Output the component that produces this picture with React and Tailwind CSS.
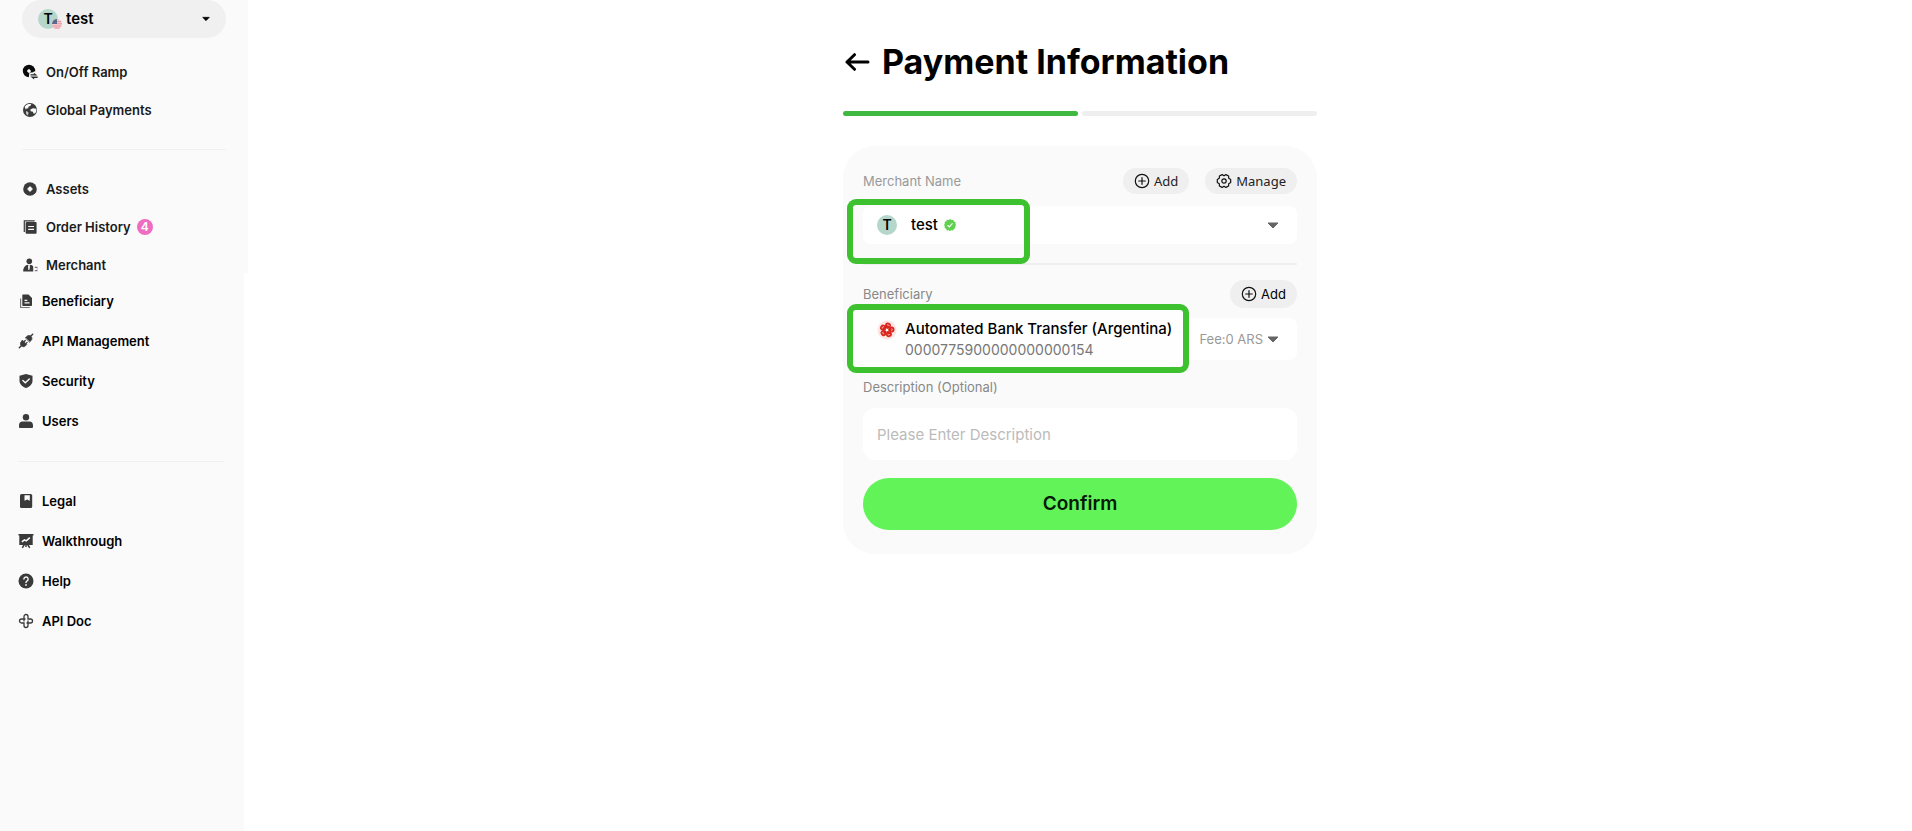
import React, { useState } from 'react';

/* ---------- icons ---------- */
const RampIcon = () => (
  <svg viewBox="0 0 16 16" className="w-4 h-4 shrink-0" aria-hidden="true">
    <circle cx="7" cy="7" r="6.200" fill="#0a0a0a" />
    <path fill="#fafafa" d="m7 4.800 2.200 2.200L7 9.200 4.800 7Z" />
    <path fill="#fafafa" d="M7.400 8.600h3l2-1.400 3.600 3.200V16H8.600l-1.800-2.800Z" />
    <path fill="#2b2b2b" d="M8.500 10.200h3.300V8.700l3.700 2.900h-7Zm7.100 2.400v1.300h-3.400v1.500l-3.900-2.800Z" />
  </svg>
);

const GlobeIcon = () => (
  <svg viewBox="0 0 16 16" className="w-4 h-4 shrink-0" aria-hidden="true">
    <circle cx="8" cy="8" r="7" fill="#3a3a3a" />
    <path fill="#fafafa" d="M2.600 4.800c1-1.500 2.200-2.400 3.900-2.900l2.700.1-.8 1.900-1.800.6-.4 1.700-1.700.3-.5 1.200Z" />
    <path fill="#fafafa" d="M8.300 7.400 11 6.200l3.300.6c.2 1.700-.1 3.200-1 4.500l-1.600.4-.8-1.900-2.200-.6Z" />
    <path fill="#fafafa" d="M4 9l2.200 1.100.3 1.500-.8 1.800C4.400 12.600 3.700 11 4 9Z" opacity=".75" />
  </svg>
);

const AssetsIcon = () => (
  <svg viewBox="0 0 16 16" className="w-4 h-4 shrink-0" aria-hidden="true">
    <circle cx="8" cy="8" r="6.800" fill="#3a3a3a" />
    <path fill="#fafafa" d="M8 6 10 8 8 10 6 8Z" stroke="#fafafa" strokeWidth="1.400" strokeLinejoin="round" />
  </svg>
);

const OrderIcon = () => (
  <svg viewBox="0 0 16 16" className="w-4 h-4 shrink-0" aria-hidden="true">
    <path fill="none" stroke="#3a3a3a" strokeWidth="1.200" d="M2.300 13V1.800h10.400" />
    <rect x="3.600" y="3" width="11" height="11.800" rx="1" fill="#3a3a3a" />
    <path stroke="#fafafa" strokeWidth="1.200" d="M6.200 7.500h5.800M6.200 10.300h5.800" />
  </svg>
);

const MerchantIcon = () => (
  <svg viewBox="0 0 16 16" className="w-4 h-4 shrink-0" aria-hidden="true">
    <circle cx="7.300" cy="4.200" r="2.800" fill="#3a3a3a" />
    <path fill="#3a3a3a" d="M1.200 14.500c0-4 2-6.400 5-6.700l.8 3 1-3c1.500.1 2.600.8 3.200 1.700v5Z" />
    <path fill="#fafafa" d="m7 8.600.9 1-.5 3.300h-1l-.4-3.300Z" />
    <path stroke="#777" strokeWidth="1.200" d="M12.800 10.400h2.700M12.800 13.600h2.700M14.800 12h.8" />
  </svg>
);

const BeneficiaryIcon = () => (
  <svg viewBox="0 0 16 16" className="w-4 h-4 shrink-0" aria-hidden="true">
    <path fill="none" stroke="#777" strokeWidth="1.200" d="M2.600 5.500v9h9.200" />
    <path fill="#3a3a3a" d="M4.300 2.500c0-.6.4-1 1-1h5.200L14 5v7c0 .6-.4 1-1 1H5.300c-.6 0-1-.4-1-1Z" />
    <path stroke="#fafafa" strokeWidth="1.200" d="M6.500 7.300h2.800M6.500 9.900h5" />
  </svg>
);

const PlugIcon = () => (
  <svg viewBox="0 0 16 16" className="w-4 h-4 shrink-0" aria-hidden="true">
    <g fill="#3a3a3a" stroke="#3a3a3a" strokeLinecap="round">
      <path strokeWidth="1.400" d="m1.300 14.700 2-2M12.700 3.300l2-2" />
      <path strokeWidth=".8" strokeLinejoin="round" d="M4.500 7.300 8.700 11.500 7.500 12.800c-1.300 1.200-3 1.200-4.200 0s-1.200-3 0-4.200ZM7.600 4.600 8.800 3.400c1.200-1.200 3-1.200 4.200 0s1.200 3 0 4.200l-1.200 1.200Z" />
      <path strokeWidth="1.200" d="M6.300 8.500 7.300 7.500M8.200 10.300l.9-.9" />
    </g>
  </svg>
);

const ShieldIcon = () => (
  <svg viewBox="0 0 16 16" className="w-4 h-4 shrink-0" aria-hidden="true">
    <path fill="#3a3a3a" d="m8 1 6.500 1.800v5c0 3.300-2.500 5.800-6.500 7.200-4-1.400-6.500-3.900-6.500-7.200v-5Z" />
    <path fill="none" stroke="#fafafa" strokeWidth="1.400" strokeLinecap="round" d="m4.900 7.400 2.400 2.400 4-3.900" />
  </svg>
);

const UserIcon = () => (
  <svg viewBox="0 0 16 16" className="w-4 h-4 shrink-0" aria-hidden="true">
    <circle cx="8" cy="4.200" r="3.200" fill="#3a3a3a" />
    <path fill="#3a3a3a" d="M1 12.300c0-2.400 1.400-3.900 3.600-3.900h6.800c2.200 0 3.600 1.500 3.600 3.900v1.400c0 .7-.5 1.300-1.300 1.300H2.300C1.500 15 1 14.400 1 13.700Z" />
  </svg>
);

const LegalIcon = () => (
  <svg viewBox="0 0 16 16" className="w-4 h-4 shrink-0" aria-hidden="true">
    <rect x="2" y="1" width="12.200" height="14" rx="1.500" fill="#3a3a3a" />
    <path fill="#fafafa" d="M6.500 2.300h5.300v5.500L9.150 6.500 6.500 7.800Z" />
  </svg>
);

const BoardIcon = () => (
  <svg viewBox="0 0 16 16" className="w-4 h-4 shrink-0" aria-hidden="true">
    <path fill="#3a3a3a" d="M.5 1h15v1.600h-.8v9.300H1.300V2.600H.5Z" />
    <path stroke="#3a3a3a" strokeWidth="1.500" d="m6.300 11.500-2 3.300M9.700 11.500l2 3.300M8 11.500V14" />
    <path fill="none" stroke="#fafafa" strokeWidth="1.600" d="m3.900 8.900 2.500-2 1.900 1 3.500-3.200" />
  </svg>
);

const HelpIcon = () => (
  <svg viewBox="0 0 16 16" className="w-4 h-4 shrink-0" aria-hidden="true">
    <circle cx="8" cy="8" r="7.500" fill="#3a3a3a" />
    <path fill="none" stroke="#fafafa" strokeWidth="1.400" strokeLinecap="round" d="M5.900 6.100a2.100 2.100 0 1 1 3.300 1.700C8.400 8.300 8 8.600 8 9.500" />
    <circle cx="8" cy="11.900" r=".9" fill="#fafafa" />
  </svg>
);

const ApiDocIcon = () => (
  <svg viewBox="0 0 16 16" className="w-4 h-4 shrink-0" aria-hidden="true">
    <g fill="none" stroke="#3a3a3a" strokeWidth="1.300">
      <path d="M6 8.500V3.500a2 2 0 0 1 4 0V6h2.500a2 2 0 0 1 0 4H8.500" />
      <path d="M10 7.500v5a2 2 0 0 1-4 0V10H3.500a2 2 0 0 1 0-4h4" />
    </g>
  </svg>
);

const PlusCircle = () => (
  <svg viewBox="0 0 16 16" className="w-4 h-4 shrink-0" fill="none" stroke="#111" strokeWidth="1.200" strokeLinecap="round" aria-hidden="true">
    <circle cx="8" cy="8" r="6.700" />
    <path d="M8 4.700v6.600M4.700 8h6.600" />
  </svg>
);

const GearIcon = () => (
  <svg viewBox="0 0 16 16" className="w-4 h-4 shrink-0" fill="none" stroke="#111" strokeWidth="1.200" strokeLinejoin="round" aria-hidden="true">
    <path d="M14.700 6.500v3L12.700 10.700 12.600 13 9.900 14.400 8 13.200 6.100 14.400 3.400 13 3.300 10.700 1.300 9.500v-3L3.300 5.300 3.400 3 6.100 1.600 8 2.800 9.900 1.600 12.600 3l.1 2.300Z" />
    <circle cx="8" cy="8" r="2.200" />
  </svg>
);

const Caret = ({ className }) => (
  <svg viewBox="0 0 12 7" className={className} aria-hidden="true">
    <path fill="currentColor" stroke="currentColor" strokeLinejoin="round" d="M1 1h10L6 6Z" />
  </svg>
);

const VerifiedIcon = () => (
  <svg viewBox="0 0 12 12" className="w-3 h-3 shrink-0" aria-label="Verified">
    <path fill="#5fd04f" d="m6 0 1.500 1 1.800-.2.700 1.600 1.600.8-.2 1.700L12 6l-.8 1.400.1 1.700-1.500.8-.8 1.500-1.700-.2L6 12l-1.400-.8-1.700.2-.8-1.600-1.500-.8.200-1.700L0 6l.8-1.300-.1-1.700 1.500-.7L3 .8 4.600 1Z" />
    <path fill="none" stroke="#fff" strokeWidth="1.200" d="m3.500 6.100 1.800 1.700 3.200-3.400" />
  </svg>
);

const BankLogo = () => (
  <svg viewBox="0 0 20 20" className="w-5 h-5 shrink-0" aria-hidden="true">
    <circle cx="10" cy="10" r="9.500" fill="#fbe4e2" />
    <g transform="rotate(12 10 10)">
      {[0, 72, 144, 216, 288].map((deg) => (
        <g key={deg} transform={`rotate(${deg} 10 10)`}>
          <ellipse cx="10" cy="5.400" rx="3" ry="2.900" fill="#d9251c" />
          <path fill="none" stroke="#fbe4e2" strokeWidth=".8" d="M9 5.200c.8-.9 2-.5 2.200.6" />
          <path stroke="#d9251c" strokeWidth="1.600" d="M10 6v3" />
        </g>
      ))}
    </g>
    <circle cx="10" cy="10" r="1.300" fill="#fff" />
  </svg>
);

/* ---------- data ---------- */
const rampLinks = [
  { label: 'On/Off Ramp', Icon: RampIcon },
  { label: 'Global Payments', Icon: GlobeIcon },
];
const accountLinks = [
  { label: 'Assets', Icon: AssetsIcon },
  { label: 'Order History', Icon: OrderIcon, badge: 4 },
  { label: 'Merchant', Icon: MerchantIcon },
];
const settingsLinks = [
  { label: 'Beneficiary', Icon: BeneficiaryIcon },
  { label: 'API Management', Icon: PlugIcon },
  { label: 'Security', Icon: ShieldIcon },
  { label: 'Users', Icon: UserIcon },
];
const supportLinks = [
  { label: 'Legal', Icon: LegalIcon },
  { label: 'Walkthrough', Icon: BoardIcon },
  { label: 'Help', Icon: HelpIcon },
  { label: 'API Doc', Icon: ApiDocIcon },
];

function NavList({ items, className }) {
  return (
    <ul className={`flex flex-col ${className}`}>
      {items.map(({ label, Icon, badge }) => (
        <li key={label}>
          <a href="#" className="flex items-center h-4 text-[13px] leading-4 font-semibold">
            <Icon />
            <span className="ml-2">{label}</span>
            {badge && (
              <span className="ml-1.5 w-4 h-4 rounded-full bg-[#ee6dc0] text-white text-xs leading-4 text-center">
                {badge}
              </span>
            )}
          </a>
        </li>
      ))}
    </ul>
  );
}

export default function App() {
  const [description, setDescription] = useState('');

  return (
    <div className="min-h-screen flex bg-white text-black font-['Inter',sans-serif]">
      {/* Sidebar */}
      <aside className="w-62 shrink-0 flex flex-col">
        <div className="bg-[#fafafa] px-[22px] text-[#1a1a1a]">
          <div className="h-[38px] rounded-full bg-[#f0f0f0] flex items-center px-4">
            <span className="relative w-5 h-5 rounded-full bg-[#b5d6ca] text-black text-sm leading-5 font-semibold text-center">
              T
              <svg viewBox="0 0 10 10" className="absolute -right-1 bottom-0 w-2.5 h-2.5" aria-hidden="true">
                <circle cx="5" cy="5" r="5" fill="#f6c9d0" />
                <path stroke="#ea98a4" d="M5 2.500h4.200M5 4.700h5M.8 7h8.400M2.300 9h5.400" />
                <path fill="#5d6a8c" d="M5 0v5H0A5 5 0 0 1 5 0Z" />
              </svg>
            </span>
            <select aria-label="Account" className="flex-1 ml-2 appearance-none bg-transparent text-[15px] leading-5 font-semibold text-black outline-none">
              <option>test</option>
            </select>
            <Caret className="w-2 h-1.5 text-black" />
          </div>
          <NavList items={rampLinks} className="gap-[22px] mt-[26px]" />
          <hr className="mt-[31px] border-[#f0f0f0]" />
          <NavList items={accountLinks} className="gap-[22px] mt-[31px]" />
        </div>
        <div className="flex-1 mr-1 bg-[#fafafa] pl-[18px] pr-5 pt-5">
          <NavList items={settingsLinks} className="gap-6" />
          <hr className="mt-8 border-[#f0f0f0]" />
          <NavList items={supportLinks} className="gap-6 mt-[31px]" />
        </div>
      </aside>

      {/* Payment form */}
      <main className="flex-1 flex justify-center pt-10">
        <div className="w-full max-w-[474px]">
          <div className="flex items-center gap-3 h-11">
            <button type="button" aria-label="Back" className="pl-0.5">
              <svg viewBox="0 0 25 18" className="w-[25px] h-[18px]" fill="none" stroke="#000" strokeWidth="3" strokeLinecap="round" strokeLinejoin="round" aria-hidden="true">
                <path d="M23 9H2M9.500 1.700 2 9l7.500 7.300" />
              </svg>
            </button>
            <h1 className="text-[34px] leading-10 font-bold whitespace-nowrap">Payment Information</h1>
          </div>

          <div className="grid grid-cols-2 gap-1 mt-[27px]">
            <span className="h-[5px] rounded-full bg-[#3fb93f]" />
            <span className="h-[5px] rounded-full bg-[#efefef]" />
          </div>

          <form className="mt-[30px] px-5 pt-[22px] pb-6 rounded-4xl bg-[#fafafa]" onSubmit={(e) => e.preventDefault()}>
            {/* Merchant */}
            <div className="flex items-center h-[26px]">
              <label htmlFor="merchant" className="text-[13px] leading-4 text-[#999]">Merchant Name</label>
              <button type="button" className="ml-auto h-[26px] px-[11px] rounded-full bg-[#efefef] flex items-center gap-1 text-[13px] leading-4 text-[#222] font-['Noto_Sans',sans-serif]">
                <PlusCircle />
                Add
              </button>
              <button type="button" className="ml-4 h-[26px] px-[11px] rounded-full bg-[#efefef] flex items-center gap-1 text-[13px] leading-4 text-[#222] font-['Noto_Sans',sans-serif]">
                <GearIcon />
                Manage
              </button>
            </div>
            <div className="relative mt-3 h-[38px] rounded-lg bg-white flex items-center pl-3.5 pr-[18px]">
              <span className="w-5 h-5 rounded-full bg-[#b5d6ca] text-sm leading-5 font-semibold text-center">T</span>
              <select id="merchant" className="ml-3.5 mr-1.5 appearance-none bg-transparent text-[15px] leading-5 font-medium outline-none [field-sizing:content]">
                <option>test</option>
              </select>
              <VerifiedIcon />
              <Caret className="ml-auto w-3 h-[7px] text-[#666]" />
              <span className="absolute z-10 -left-4 -top-[7px] w-[183px] h-[65px] rounded-[9px] border-6 border-[#3dc12f] pointer-events-none" />
            </div>

            <hr className="mt-[19px] border-t-2 border-[#efefef]" />

            {/* Beneficiary */}
            <div className="flex items-center justify-between mt-[15px] h-7">
              <label htmlFor="beneficiary" className="text-[13px] leading-4 text-[#888]">Beneficiary</label>
              <button type="button" className="h-7 px-[11px] rounded-full bg-[#efefef] flex items-center gap-1 text-[13px] leading-4">
                <PlusCircle />
                Add
              </button>
            </div>
            <div className="relative mt-2.5 h-[42px] rounded-lg bg-white flex items-center pl-3.5 pr-[18px]">
              <span className="absolute -left-4 -top-3.5 w-[342px] h-[69px] rounded-[9px] border-6 border-[#3dc12f] bg-[#fefefe] pointer-events-none" />
              <span className="relative self-start mt-0.5">
                <BankLogo />
              </span>
              <div className="relative ml-2 flex flex-col items-start">
                <select id="beneficiary" className="appearance-none bg-transparent text-[15px] leading-[22px] font-medium outline-none">
                  <option>Automated Bank Transfer (Argentina)</option>
                </select>
                <span className="text-sm leading-5 text-[#777]">0000775900000000000154</span>
              </div>
              <span className="ml-auto text-[13px] leading-4 text-[#999] whitespace-nowrap">Fee:0 ARS</span>
              <Caret className="ml-1 w-3 h-[7px] text-[#666]" />
            </div>

            {/* Description */}
            <label htmlFor="description" className="block mt-[19px] text-[13px] leading-4 text-[#888]">Description (Optional)</label>
            <input
              id="description"
              type="text"
              value={description}
              onChange={(e) => setDescription(e.target.value)}
              placeholder="Please Enter Description"
              className="mt-[13px] w-full h-[52px] px-3.5 rounded-xl bg-white text-[15px] placeholder:text-[#bbb] outline-none"
            />
            <button type="submit" className="mt-[18px] w-full h-[52px] rounded-full bg-[#62f358] text-[19px] font-semibold text-[#061a06]">
              Confirm
            </button>
          </form>
        </div>
      </main>
    </div>
  );
}
